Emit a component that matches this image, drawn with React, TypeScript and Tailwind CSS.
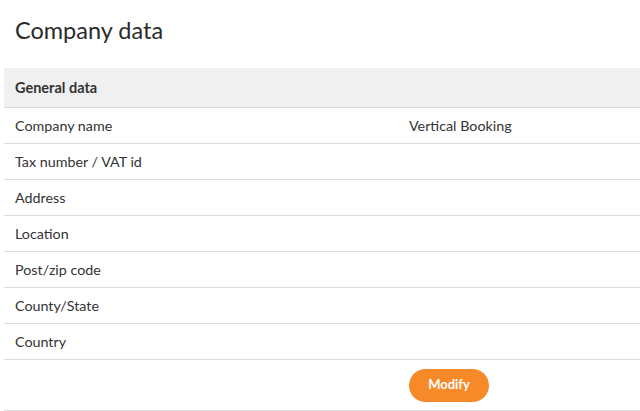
import React from "react";

const rows: [string, string][] = [
  ["Company name", "Vertical Booking"],
  ["Tax number / VAT id", ""],
  ["Address", ""],
  ["Location", ""],
  ["Post/zip code", ""],
  ["County/State", ""],
  ["Country", ""],
];

export default function App() {
  return (
    <div className="w-[640px] h-[411px] bg-white overflow-hidden text-[#333]" style={{ fontFamily: "Lato, 'Noto Sans', sans-serif" }}>
      <h1 className="pl-[15px] pt-[17px] h-[68px] text-[23.5px] leading-[26px] text-[#2b2b2b]">Company data</h1>
      <div className="ml-[4px]">
        <div className="h-[40px] bg-[#f0f0f0] border-b border-[#dcdcdc] flex items-center pl-[11px] text-[14.5px] font-bold text-[#333]">
          General data
        </div>
        {rows.map(([label, value]) => (
          <div key={label} className="h-[36px] border-b border-[#dcdcdc] flex items-center text-[14.3px]">
            <div className="w-[405px] pl-[11px]">{label}</div>
            <div>{value}</div>
          </div>
        ))}
        <div className="h-[51px] border-b border-[#dcdcdc] flex items-center">
          <div className="w-[405px]" />
          <button className="w-[80px] h-[33px] rounded-full bg-[#f78a28] text-white text-[13px] font-bold">Modify</button>
        </div>
      </div>
    </div>
  );
}
